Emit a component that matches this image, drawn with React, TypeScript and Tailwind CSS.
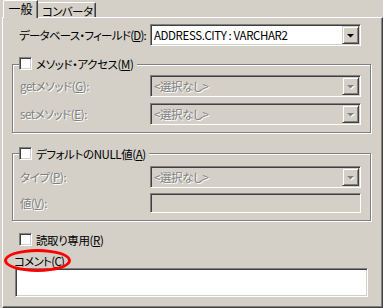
import React from "react";

const sunken =
  "border border-t-[#808080] border-l-[#808080] border-r-white border-b-white shadow-[inset_1px_1px_0_#404040,inset_-1px_-1px_0_#d4d0c8]";
const raised =
  "border border-t-[#d4d0c8] border-l-[#d4d0c8] border-r-[#404040] border-b-[#404040] shadow-[inset_1px_1px_0_#fff,inset_-1px_-1px_0_#808080]";
const etched =
  "border border-[#808080] shadow-[inset_1px_1px_0_#fff,1px_1px_0_#fff]";
const grayText = "text-[#808080] [text-shadow:1px_1px_0_#fff]";

function Key({ k }: { k: string }) {
  return <span className="underline underline-offset-1">{k}</span>;
}

function Arrow({ disabled }: { disabled?: boolean }) {
  return (
    <svg width="9" height="5" viewBox="0 0 9 5" className="overflow-visible">
      {disabled && <path d="M2 2h7L5.5 5.5z" fill="#fff" />}
      <path d="M1 1h7L4.5 4.5z" fill={disabled ? "#808080" : "#000"} />
    </svg>
  );
}

function Combo({ value, disabled }: { value: string; disabled?: boolean }) {
  return (
    <div
      className={`${sunken} shrink-0 flex items-center w-[211px] h-[22px] p-[1px] ${
        disabled ? "bg-[#d4d0c8]" : "bg-white"
      }`}
    >
      <span
        className={`flex-1 pl-[2px] whitespace-nowrap ${
          disabled ? grayText : "text-black"
        }`}
      >
        {value}
      </span>
      <div
        className={`${raised} w-[17px] h-[18px] bg-[#d4d0c8] flex items-center justify-center`}
      >
        <Arrow disabled={disabled} />
      </div>
    </div>
  );
}

function Check({ children }: { children: React.ReactNode }) {
  return (
    <div className="flex items-center h-[13px] gap-[4px]">
      <div className={`${sunken} shrink-0 w-[13px] h-[13px] bg-white`} />
      <span className="whitespace-nowrap">{children}</span>
    </div>
  );
}

export default function App() {
  return (
    <div className="w-[383px] h-[308px] bg-[#d4d0c8] overflow-hidden text-[11.5px] leading-[12px] tracking-[-0.4px] text-black font-['Noto_Sans_CJK_JP',sans-serif] [font-feature-settings:'palt']">
      {/* tabs */}
      <div className="flex items-end h-[17px] pl-[3px]">
        <div className="relative z-10 -mb-[1px] h-[18px] w-[35px] bg-[#d4d0c8] border-l border-t border-white border-r border-r-[#404040] shadow-[inset_-1px_0_0_#808080] rounded-tl-[2px] flex items-center justify-center pb-[1px] text-[12px] tracking-normal">
          一般
        </div>
        <div className="h-[15px] w-[58px] border-t border-white border-r border-r-[#404040] shadow-[inset_-1px_0_0_#808080] rounded-tr-[2px] flex items-center pl-[4px] pt-[1px] tracking-[-0.6px]">
          コンバータ
        </div>
      </div>

      {/* panel */}
      <div className="relative ml-[2px] w-[381px] h-[291px] border-l border-t border-white border-r border-b border-r-[#404040] border-b-[#404040] shadow-[inset_-1px_-1px_0_#808080]">
        <div className="flex items-center mt-[6px] pl-[16px] h-[22px]">
          <span className="w-[131px] shrink-0 whitespace-nowrap tracking-[-0.75px]">
            データベース・フィールド(<Key k="D" />):
          </span>
          <Combo value="ADDRESS.CITY : VARCHAR2" />
        </div>

        <div className={`${etched} ml-[9px] mt-[18px] w-[359px] h-[69px]`}>
          <div className="-mt-[8px] ml-[6px] w-fit bg-[#d4d0c8] pr-[3px]">
            <Check>
              メソッド・アクセス(<Key k="M" />)
            </Check>
          </div>
          <div className="flex items-center mt-[5px] pl-[7px] h-[22px]">
            <span className={`w-[130px] shrink-0 ${grayText}`}>
              getメソッド(<Key k="G" />):
            </span>
            <Combo value="<選択なし>" disabled />
          </div>
          <div className="flex items-center mt-[6px] pl-[7px] h-[22px]">
            <span className={`w-[130px] shrink-0 ${grayText}`}>
              setメソッド(<Key k="E" />):
            </span>
            <Combo value="<選択なし>" disabled />
          </div>
        </div>

        <div className={`${etched} ml-[9px] mt-[20px] w-[359px] h-[68px]`}>
          <div className="-mt-[7px] ml-[6px] w-fit bg-[#d4d0c8] pr-[3px]">
            <Check>
              デフォルトのNULL値(<Key k="A" />)
            </Check>
          </div>
          <div className="flex items-center mt-[6px] pl-[7px] h-[22px]">
            <span className={`w-[130px] shrink-0 ${grayText}`}>
              タイプ(<Key k="P" />):
            </span>
            <Combo value="<選択なし>" disabled />
          </div>
          <div className="flex items-center mt-[5px] pl-[7px] h-[20px]">
            <span className={`w-[130px] shrink-0 ${grayText}`}>
              値(<Key k="V" />):
            </span>
            <div className={`${sunken} shrink-0 w-[211px] h-[20px] bg-[#d4d0c8]`} />
          </div>
        </div>

        <div className="mt-[12px] ml-[16px]">
          <Check>
            読取り専用(<Key k="R" />)
          </Check>
        </div>

        <div className="relative mt-[9px] ml-[11px] w-fit tracking-[-0.7px]">
          <span className="whitespace-nowrap">
            コメント(<Key k="C" />)
          </span>
          <div className="absolute -left-[10px] -top-[6px] w-[67px] h-[23px] rounded-[50%] border-[3px] border-[#ff0000]" />
        </div>

        <div className={`${sunken} mt-[1px] ml-[12px] w-[353px] h-[29px] bg-white`} />
      </div>
    </div>
  );
}
